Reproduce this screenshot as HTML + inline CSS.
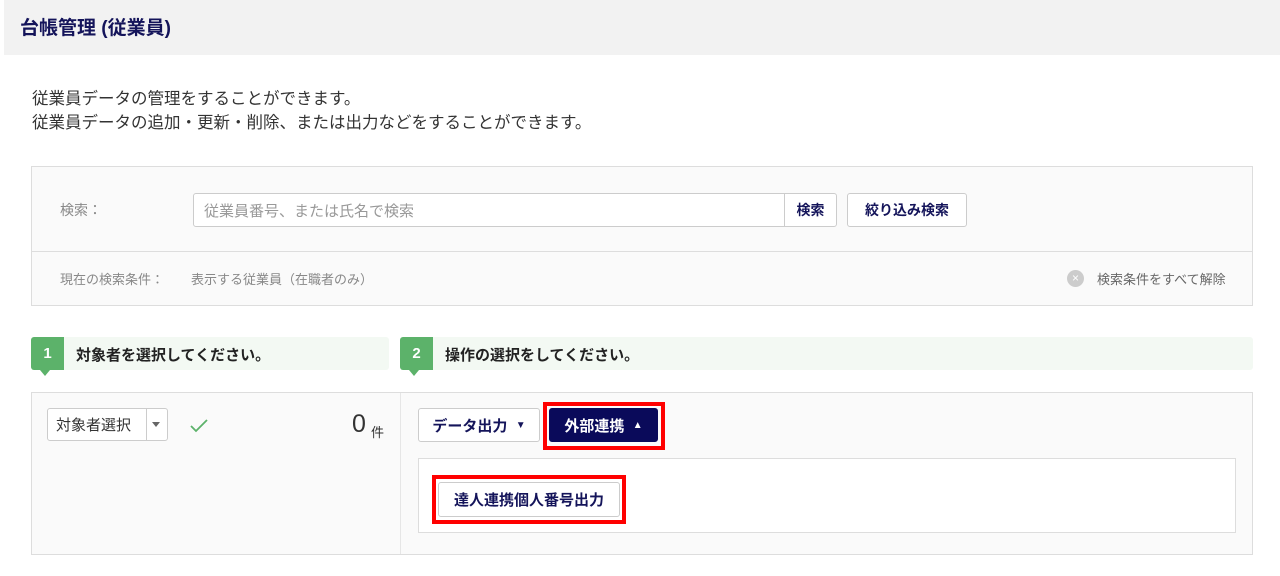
<!DOCTYPE html>
<html><head><meta charset="utf-8"><style>
*{box-sizing:border-box;margin:0;padding:0}
body{width:1280px;height:576px;background:#fff;font-family:"Liberation Sans","Noto Sans CJK JP",sans-serif;position:relative;overflow:hidden;color:#333}
.a{position:absolute}
.btn{position:absolute;background:#fff;border:1px solid #ccc;border-radius:3px;font-weight:bold;color:#14145a;font-size:14px;display:flex;align-items:center;justify-content:center}
</style></head><body>
<div class="a" style="left:4px;top:0;width:1276px;height:55px;background:#f2f2f2"></div>
<div class="a" style="left:20px;top:13px;font-size:19px;font-weight:bold;color:#14145a">台帳管理 (従業員)</div>
<div class="a" style="left:32px;top:87px;font-size:16.5px;line-height:24px;color:#333">従業員データの管理をすることができます。<br>従業員データの追加・更新・削除、または出力などをすることができます。</div>

<div class="a" style="left:31px;top:166px;width:1222px;height:140px;background:#fafafa;border:1px solid #ddd"></div>
<div class="a" style="left:32px;top:251px;width:1220px;height:1px;background:#ddd"></div>
<div class="a" style="left:60px;top:200px;font-size:14px;color:#888">検索：</div>
<div class="a" style="left:193px;top:193px;width:592px;height:34px;background:#fff;border:1px solid #ccc;border-radius:3px 0 0 3px;font-size:15px;color:#999;padding:6px 10px">従業員番号、または氏名で検索</div>
<div class="btn" style="left:784px;top:193px;width:53px;height:34px;border-radius:0 3px 3px 0;font-size:14px">検索</div>
<div class="btn" style="left:847px;top:193px;width:120px;height:34px;font-size:14px">絞り込み検索</div>
<div class="a" style="left:60px;top:269px;font-size:13px;color:#888">現在の検索条件：</div>
<div class="a" style="left:191px;top:269px;font-size:13px;color:#888">表示する従業員（在職者のみ）</div>
<div class="a" style="left:1067px;top:270px;width:17px;height:17px;border-radius:50%;background:#ccc;color:#fff;font-size:12px;line-height:17px;text-align:center">×</div>
<div class="a" style="left:1097px;top:269px;font-size:13px;color:#666">検索条件をすべて解除</div>

<div class="a" style="left:31px;top:337px;width:358px;height:33px;background:#f3f9f3;border-radius:3px"></div>
<div class="a" style="left:31px;top:337px;width:33px;height:33px;background:#5cb26a;color:#fff;font-weight:bold;font-size:15px;text-align:center;line-height:33px;border-radius:3px 0 0 3px">1</div>
<div class="a" style="left:40px;top:370px;border-left:5px solid transparent;border-right:5px solid transparent;border-top:6px solid #5cb26a"></div>
<div class="a" style="left:76px;top:344px;font-size:15px;font-weight:bold;color:#222">対象者を選択してください。</div>
<div class="a" style="left:400px;top:337px;width:853px;height:33px;background:#f3f9f3;border-radius:3px"></div>
<div class="a" style="left:400px;top:337px;width:33px;height:33px;background:#5cb26a;color:#fff;font-weight:bold;font-size:15px;text-align:center;line-height:33px;border-radius:3px 0 0 3px">2</div>
<div class="a" style="left:409px;top:370px;border-left:5px solid transparent;border-right:5px solid transparent;border-top:6px solid #5cb26a"></div>
<div class="a" style="left:445px;top:344px;font-size:15px;font-weight:bold;color:#222">操作の選択をしてください。</div>

<div class="a" style="left:31px;top:392px;width:1222px;height:163px;background:#fafafa;border:1px solid #ddd"></div>
<div class="a" style="left:400px;top:393px;width:1px;height:161px;background:#e6e6e6"></div>
<div class="a" style="left:47px;top:408px;width:121px;height:33px;background:#fff;border:1px solid #ccc;border-radius:3px"></div>
<div class="a" style="left:146px;top:409px;width:1px;height:31px;background:#ccc"></div>
<div class="a" style="left:56px;top:414px;font-size:15px;color:#333">対象者選択</div>
<div class="a" style="left:152px;top:422px;border-left:4px solid transparent;border-right:4px solid transparent;border-top:5px solid #666"></div>
<svg class="a" style="left:189px;top:418px" width="20" height="16"><path d="M2 8 L7 13 L18 2" fill="none" stroke="#5cb26a" stroke-width="1.8"/></svg>
<div class="a" style="left:352px;top:410px;font-size:25px;color:#333">0</div>
<div class="a" style="left:371px;top:422px;font-size:13px;color:#333">件</div>

<div class="btn" style="left:418px;top:408px;width:122px;height:34px;font-size:15px">データ出力&nbsp;&nbsp;<span style="font-size:10px">▼</span></div>
<div class="a" style="left:543px;top:402px;width:122px;height:48px;border:4px solid #f00"></div>
<div class="btn" style="left:549px;top:408px;width:109px;height:34px;background:#0a0a5a;border-color:#0a0a5a;color:#fff;font-size:15px">外部連携&nbsp;&nbsp;<span style="font-size:10px">▲</span></div>
<div class="a" style="left:418px;top:458px;width:818px;height:75px;background:#fff;border:1px solid #ddd"></div>
<div class="a" style="left:432px;top:475px;width:194px;height:49px;border:4px solid #f00"></div>
<div class="btn" style="left:438px;top:482px;width:182px;height:35px;background:#fff;font-size:15px">達人連携個人番号出力</div>
</body></html>
